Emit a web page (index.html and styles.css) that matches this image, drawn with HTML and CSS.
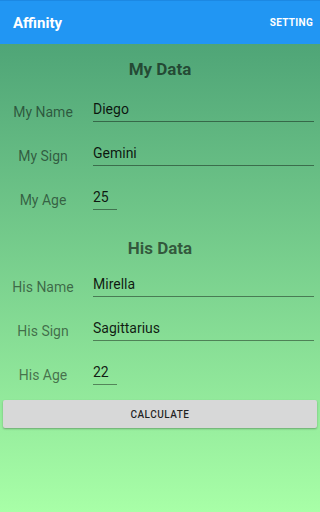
FILE: index.html
```html
<!DOCTYPE html>
<html>
<head>
<meta charset="utf-8">
<link rel="stylesheet" href="styles.css">
</head>
<body>
<div class="app">
  <header class="appbar">
    <span class="title">Affinity</span>
    <span class="action">SETTING</span>
  </header>
  <main class="content">
    <h2 class="heading heading-first">My Data</h2>
    <div class="row"><span class="label">My Name</span><span class="field">Diego</span></div>
    <div class="row"><span class="label">My Sign</span><span class="field">Gemini</span></div>
    <div class="row"><span class="label">My Age</span><span class="field field-short">25</span></div>
    <h2 class="heading heading-second">His Data</h2>
    <div class="row"><span class="label">His Name</span><span class="field">Mirella</span></div>
    <div class="row"><span class="label">His Sign</span><span class="field">Sagittarius</span></div>
    <div class="row"><span class="label">His Age</span><span class="field field-short">22</span></div>
    <div class="button">CALCULATE</div>
  </main>
</div>
</body>
</html>
```

FILE: styles.css
```css
html, body {
  margin: 0;
  padding: 0;
  background: #a8ffa7;
}
body {
  height: 512px;
  overflow: hidden;
  font-family: Roboto, "Liberation Sans", sans-serif;
}
.app {
  display: flex;
  flex-direction: column;
  height: 512px;
}
.appbar {
  box-sizing: border-box;
  height: 44px;
  flex: none;
  background: #2196f3;
  border-top: 1px solid #1c88e3;
  display: flex;
  align-items: center;
  justify-content: space-between;
  padding: 0 7px 0 13px;
  color: #ffffff;
}
.title {
  font-size: 15px;
  font-weight: 700;
  line-height: 20px;
}
.action {
  font-size: 10px;
  font-weight: 700;
  letter-spacing: 0.3px;
  line-height: 14px;
}
.content {
  flex: 1;
  background: linear-gradient(to bottom, #4fa577 0%, #a8ffa7 100%);
  display: flex;
  flex-direction: column;
}
.heading {
  margin: 0;
  font-size: 17px;
  font-weight: 700;
  line-height: 20px;
  text-align: center;
  color: rgba(0, 0, 0, 0.58);
}
.heading-first {
  margin: 15px 0 10px;
}
.heading-second {
  margin: 17px 0 6px;
}
.row {
  height: 44px;
  display: flex;
  align-items: center;
}
.label {
  width: 86px;
  flex: none;
  text-align: center;
  font-size: 14px;
  line-height: 16px;
  color: rgba(0, 0, 0, 0.52);
  margin-top: 1px;
  margin-right: 7px;
}
.field {
  flex: 1;
  margin-right: 6px;
  font-size: 14px;
  line-height: 16px;
  padding-bottom: 4px;
  border-bottom: 1px solid rgba(0, 0, 0, 0.42);
  color: rgba(0, 0, 0, 0.88);
}
.field-short {
  flex: none;
  width: 24px;
}
.button {
  margin: 4px 3px 0;
  height: 28px;
  background: #d7d8d8;
  border-radius: 2px;
  box-shadow: 0 1px 2px rgba(0, 0, 0, 0.3);
  display: flex;
  align-items: center;
  justify-content: center;
  font-size: 10px;
  font-weight: 500;
  letter-spacing: 0.5px;
  color: rgba(0, 0, 0, 0.85);
}
```
